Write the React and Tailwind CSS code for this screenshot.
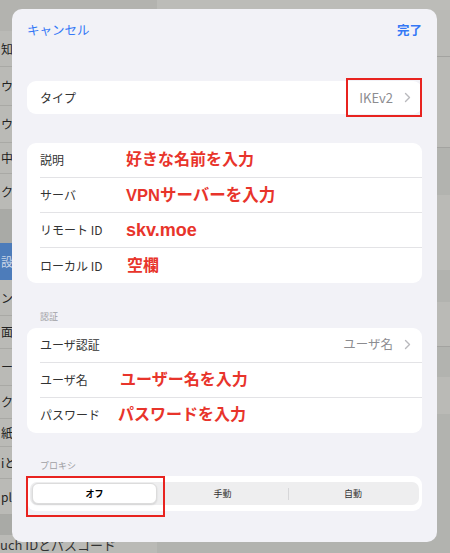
const SIDEBAR_TOP = [
  { ch: '知', h: 36 },
  { ch: 'ウ', h: 39 },
  { ch: 'ウ', h: 37 },
  { ch: '中', h: 31 },
  { ch: 'ク', h: 36 },
];

const SIDEBAR_BOTTOM = [
  { ch: 'ン', h: 36 },
  { ch: '面', h: 33 },
  { ch: 'ー', h: 37 },
  { ch: 'ク', h: 33 },
  { ch: '紙', h: 28 },
  { ch: 'iと', h: 32 },
  { ch: 'pl', h: 36 },
];

function Chevron() {
  return (
    <svg width="7" height="11" viewBox="0 0 7 11" fill="none" stroke="#b9b9bd" strokeWidth="1.4" strokeLinecap="round" strokeLinejoin="round">
      <path d="M1.5 1.5l4 4-4 4" />
    </svg>
  );
}

function Row({ label, value, last, children }) {
  return (
    <div className="flex h-[35px] items-center pl-[13px]">
      <div className={`flex h-full flex-1 items-center pr-[11px] ${last ? '' : 'border-b border-[#e3e3e6]'}`}>
        <span className="w-[73px] shrink-0 text-[12px] text-[#333]">{label}</span>
        {children}
        {value && (
          <span className="ml-auto flex items-center gap-[11px] text-[12.5px] text-[#8c8c90]">
            {value}
            <Chevron />
          </span>
        )}
      </div>
    </div>
  );
}

function Red({ children, className = '' }) {
  return (
    <span
      className={`font-bold text-[#e8342b] ${className}`}
      style={{ fontFamily: '"Liberation Sans", "Noto Sans CJK JP", sans-serif' }}
    >
      {children}
    </span>
  );
}

export default function App() {
  return (
    <div
      className="relative h-[553px] w-[450px] overflow-hidden bg-[#b1b2ae]"
      style={{ fontFamily: '"Noto Sans CJK JP", "Noto Sans", sans-serif' }}
    >
      {/* dimmed settings behind the sheet */}
      <div className="flex h-full">
        <div className="flex w-[157px] flex-col bg-[#babab6] text-[12px] text-[#222]">
          <div className="h-[31px] shrink-0 bg-[#b3b3af]" />
          {SIDEBAR_TOP.map((r, i) => (
            <div key={i} className="flex shrink-0 items-center border-b border-[#a9a9a5] pl-[1px]" style={{ height: r.h }}>
              {r.ch}
            </div>
          ))}
          <div className="h-[33px] shrink-0 bg-[#a9aaa6]" />
          <div className="flex h-[37px] shrink-0 items-center bg-[#4d7cba] pl-[1px] text-[#c9d6e8]">設</div>
          {SIDEBAR_BOTTOM.map((r, i) => (
            <div key={i} className="flex shrink-0 items-center border-b border-[#a9a9a5] pl-[1px]" style={{ height: r.h }}>
              {r.ch}
            </div>
          ))}
          <div className="h-[20px] shrink-0 bg-[#a9aaa6]" />
          <div className="flex h-[18px] shrink-0 items-center whitespace-nowrap text-[13px] leading-none text-[#333]">uch IDとパスコード</div>
        </div>
        <div className="flex flex-1 flex-col bg-[#b2b3af]">
          <div className="h-[10px] bg-[#bcbcb8]" />
          <div className="h-[47px] border-b border-[#a3a3a0] bg-[#babab6]" />
          <div className="h-[91px] border-b border-[#a3a3a0] bg-[#babab6]" />
          <div className="h-[47px]" />
          <div className="flex h-[75px] items-center justify-end bg-[#babab6] pr-[20px] text-[10px] text-[#777]">売</div>
          <div className="h-[32px]" />
          <div className="h-[45px] border-b border-[#a3a3a0] bg-[#babab6]" />
          <div className="h-[30px]" />
          <div className="h-[37px] bg-[#babab6]" />
        </div>
      </div>

      {/* sheet */}
      <div className="absolute left-[12px] top-[9px] flex h-[533px] w-[425px] flex-col rounded-[10px] bg-[#f2f2f7] px-[15px]">
        <div className="flex h-[42px] items-center justify-between text-[12.5px] text-[#3478f6]">
          <span>キャンセル</span>
          <span className="font-bold">完了</span>
        </div>

        <div className="mt-[30px] overflow-hidden rounded-[9px] bg-white">
          <div className="flex h-[33px] items-center pl-[13px] pr-[11px]">
            <span className="text-[12px] text-[#333]">タイプ</span>
            <span className="ml-auto flex items-center gap-[11px] text-[13px] text-[#8c8c90]">
              IKEv2
              <Chevron />
            </span>
          </div>
        </div>

        <div className="mt-[29px] overflow-hidden rounded-[9px] bg-white">
          <Row label="説明">
            <Red className="ml-[13px] text-[16px]">好きな名前を入力</Red>
          </Row>
          <Row label="サーバ">
            <Red className="ml-[13px] text-[16.5px]">VPNサーバーを入力</Red>
          </Row>
          <Row label="リモート ID">
            <Red className="ml-[13px] text-[18px]">skv.moe</Red>
          </Row>
          <Row label="ローカル ID" last>
            <Red className="ml-[14px] text-[16px]">空欄</Red>
          </Row>
        </div>

        <div className="mt-[27px] pl-[13px] text-[9px] text-[#a0a0a4]">認証</div>
        <div className="mt-[4px] overflow-hidden rounded-[9px] bg-white">
          <Row label="ユーザ認証" value="ユーザ名" />
          <Row label="ユーザ名">
            <Red className="ml-[7px] text-[16px]">ユーザー名を入力</Red>
          </Row>
          <Row label="パスワード" last>
            <Red className="ml-[5px] text-[16px]">パスワードを入力</Red>
          </Row>
        </div>

        <div className="mt-[26px] pl-[13px] text-[9px] text-[#a0a0a4]">プロキシ</div>
        <div className="mt-[4px] rounded-[9px] bg-white px-[3px] py-[6px]">
          <div className="flex h-[23px] items-center rounded-[7px] bg-[#eeeeef] px-[2px] text-[9px] text-[#333]">
            <div className="flex h-[21px] w-[125px] items-center justify-center rounded-[6px] border border-[#dcdcdc] bg-white font-bold text-black shadow-[0_1px_2px_rgba(0,0,0,0.12)]">
              オフ
            </div>
            <div className="flex h-full w-[131px] items-center justify-center">手動</div>
            <div className="h-[12px] w-px bg-[#d6d6d8]" />
            <div className="flex h-full flex-1 items-center justify-center">自動</div>
          </div>
        </div>

        {/* annotation boxes */}
        <div className="absolute left-[334px] top-[69px] h-[39px] w-[76px] border-[2px] border-[#e8231f]" />
        <div className="absolute left-[14px] top-[467px] h-[41px] w-[139px] border-[2.5px] border-[#e8231f]" />
      </div>
    </div>
  );
}
